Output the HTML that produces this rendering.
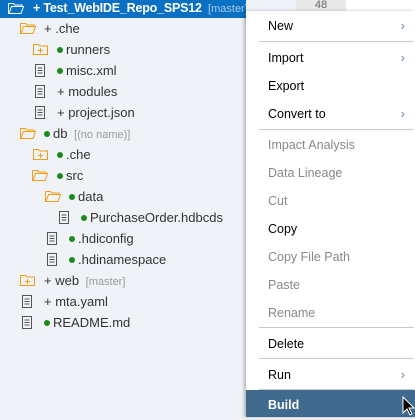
<!DOCTYPE html>
<html><head><style>
body{margin:0;width:415px;height:417px;overflow:hidden;background:#eff2f7;font-family:"Liberation Sans",Arial,sans-serif;position:relative}
.a{position:absolute}
.row{position:absolute;height:21px;line-height:21px;font-size:13px;color:#333;white-space:nowrap}
.dot{display:inline-block;width:6px;height:6px;border-radius:50%;background:#1a8a1a;margin-right:3px;vertical-align:1px}
.tag{color:#999;font-size:11px;margin-left:3px}
.menu{position:absolute;left:246px;top:11px;width:169px;height:406px;background:#fff;box-shadow:-2px 0 3px rgba(0,0,0,.25)}
.mi{position:absolute;left:0;width:169px;height:28px;line-height:30px;font-size:12.5px;padding-left:22px;box-sizing:border-box;color:#000}
.dis{color:#888}
.sep{position:absolute;left:13px;width:155px;height:1px;background:#c8c8c8}
.arr{position:absolute;right:10px;top:0;color:#6a8caf;font-size:13px}
</style></head><body>
<div class="a" style="left:0;top:0;width:246px;height:18px;background:#0a70c4"></div>
<div class="a" style="left:296px;top:0;width:50px;height:11px;background:#e8e8e8;font-size:11px;line-height:11px;text-align:center;color:#666">48</div>
<div class="a" style="left:346px;top:0;width:69px;height:11px;background:#fff"></div>
<svg class="a" style="left:0;top:0" width="246" height="340">
<defs>
<g id="fo"><path d="M0.5 1.5h5l1.5 1.5h7v2" fill="none" stroke="currentColor"/><path d="M0.5 1.5v10h12.5l2.5-7h-12l-2.5 7" fill="none" stroke="currentColor"/></g>
<g id="fc"><path d="M0.5 1.5h5l1.5 1.5h7.5v8.5h-14z" fill="none" stroke="currentColor"/><path d="M5 7.5h5M7.5 5v5" stroke="currentColor"/></g>
<g id="fi"><path d="M0.5 0.5h9v12h-9z" fill="none" stroke="#555"/><path d="M2.5 4h5M2.5 6.5h5M2.5 9h5" stroke="#555"/></g>
</defs>
<use href="#fo" x="8" y="2" style="color:#fff"/>
<use href="#fo" x="20" y="22" style="color:#f39c12"/>
<use href="#fc" x="33" y="43" style="color:#f39c12"/>
<use href="#fi" x="35" y="64"/>
<use href="#fi" x="35" y="85"/>
<use href="#fi" x="35" y="106"/>
<use href="#fo" x="20" y="127" style="color:#f39c12"/>
<use href="#fc" x="33" y="148" style="color:#f39c12"/>
<use href="#fo" x="32" y="169" style="color:#f39c12"/>
<use href="#fo" x="45" y="190" style="color:#f39c12"/>
<use href="#fi" x="59" y="211"/>
<use href="#fi" x="47" y="232"/>
<use href="#fi" x="47" y="253"/>
<use href="#fc" x="20" y="274" style="color:#f39c12"/>
<use href="#fi" x="22" y="295"/>
<use href="#fi" x="22" y="316"/>
</svg>
<div class="row" style="left:33px;top:-2px;color:#fff;font-weight:bold;font-size:12.5px;width:213px;overflow:hidden;letter-spacing:-0.2px">+ Test_WebIDE_Repo_SPS12 <span class="tag" style="color:#a8c8e8;font-weight:normal;letter-spacing:0">[master]</span></div>
<div class="row" style="left:44px;top:18px">+ .che</div>
<div class="row" style="left:57px;top:39px"><span class="dot"></span>runners</div>
<div class="row" style="left:57px;top:60px"><span class="dot"></span>misc.xml</div>
<div class="row" style="left:57px;top:81px">+ modules</div>
<div class="row" style="left:57px;top:102px">+ project.json</div>
<div class="row" style="left:44px;top:123px"><span class="dot"></span>db <span class="tag">[(no name)]</span></div>
<div class="row" style="left:57px;top:144px"><span class="dot"></span>.che</div>
<div class="row" style="left:57px;top:165px"><span class="dot"></span>src</div>
<div class="row" style="left:69px;top:186px"><span class="dot"></span>data</div>
<div class="row" style="left:81px;top:207px"><span class="dot"></span>PurchaseOrder.hdbcds</div>
<div class="row" style="left:69px;top:228px"><span class="dot"></span>.hdiconfig</div>
<div class="row" style="left:69px;top:249px"><span class="dot"></span>.hdinamespace</div>
<div class="row" style="left:44px;top:270px">+ web <span class="tag">[master]</span></div>
<div class="row" style="left:44px;top:291px">+ mta.yaml</div>
<div class="row" style="left:44px;top:312px"><span class="dot"></span>README.md</div>

<div class="menu">
<div class="mi" style="top:0">New<span class="arr">›</span></div>
<div class="sep" style="top:30px"></div>
<div class="mi" style="top:32px">Import<span class="arr">›</span></div>
<div class="mi" style="top:60px">Export</div>
<div class="mi" style="top:88px">Convert to<span class="arr">›</span></div>
<div class="sep" style="top:118px"></div>
<div class="mi dis" style="top:119px">Impact Analysis</div>
<div class="mi dis" style="top:147px">Data Lineage</div>
<div class="mi dis" style="top:175px">Cut</div>
<div class="mi" style="top:203px">Copy</div>
<div class="mi dis" style="top:231px">Copy File Path</div>
<div class="mi dis" style="top:259px">Paste</div>
<div class="mi dis" style="top:287px">Rename</div>
<div class="sep" style="top:316px"></div>
<div class="mi" style="top:318px">Delete</div>
<div class="sep" style="top:347px"></div>
<div class="mi" style="top:349px">Run<span class="arr">›</span></div>
<div class="sep" style="top:378px"></div>
<div class="mi" style="top:379px;height:27px;line-height:30px;background:#3f6a8e;color:#fff;font-weight:bold">Build</div>
</div>
<svg class="a" style="left:402px;top:396px" width="13" height="21"><path d="M1 1v16l4-4 3 6 2-1-3-6h5z" fill="#000" stroke="#fff"/></svg>
</body></html>
